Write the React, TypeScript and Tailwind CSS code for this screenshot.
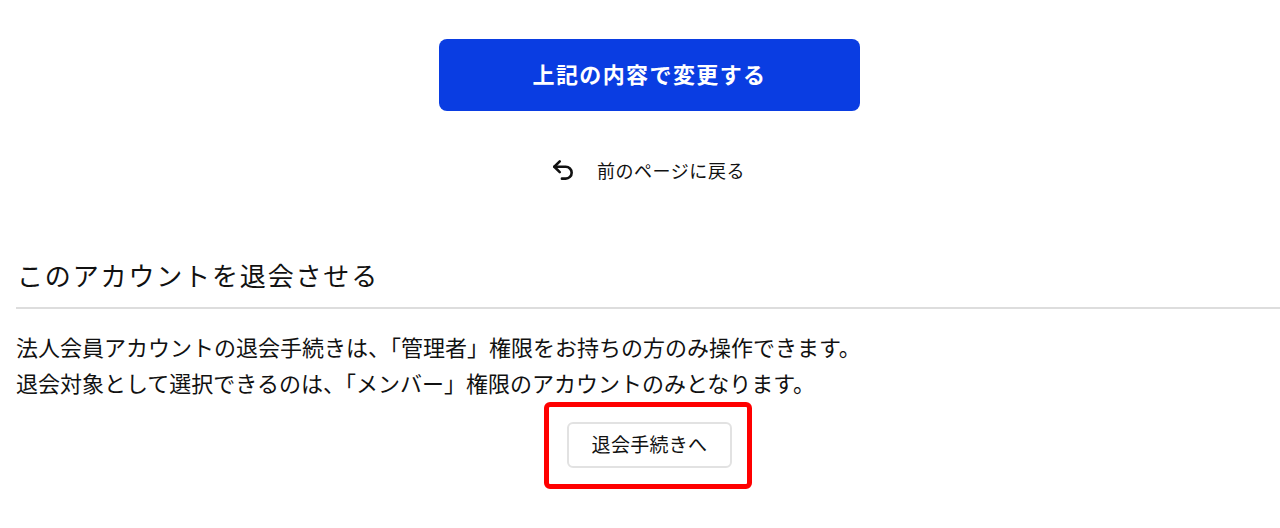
import { Undo2 } from "lucide-react";

const FONT = "font-['Noto_Sans_CJK_JP','Noto_Sans_CJK_SC',sans-serif]";

export default function App() {
    return (
        <div className={`${FONT} h-[528px] w-[1280px] overflow-hidden bg-white pt-[39px] text-[#111]`}>
            <div className="flex justify-center pl-[19px]">
                <button className="h-[72px] w-[421px] rounded-[8px] bg-[#0a3de2] pb-[4px] text-[22px] font-bold tracking-[1.4px] text-white">
                    上記の内容で変更する
                </button>
            </div>

            <div className="mt-[44px] flex items-center justify-center pl-[15px]">
                <Undo2 className="h-[26px] w-[26px]" strokeWidth={2.4} />
                <span className="ml-[21px] text-[18px] leading-[30px] tracking-[0.55px]">前のページに戻る</span>
            </div>

            <div className="mt-[70px] pl-[16px]">
                <h2 className="border-b-2 border-[#ddd] pb-[12px] pl-[1px] text-[26px] leading-[40px] tracking-[1.85px]">
                    このアカウントを退会させる
                </h2>
                <p className="mt-[19px] text-[22px] leading-[36px]">
                    法人会員アカウントの退会手続きは、「管理者」権限をお持ちの方のみ操作できます。
                    <br />
                    退会対象として選択できるのは、「メンバー」権限のアカウントのみとなります。
                </p>
            </div>

            <div className="mt-[2px] flex justify-center pl-[16px]">
                <div className="flex h-[87px] w-[208px] items-center justify-center rounded-[6px] border-[5px] border-[#ff0000] pb-[1px] pl-[3px]">
                    <button className="h-[46px] w-[165px] rounded-[6px] border-2 border-[#e2e2e2] bg-white pb-[2px] text-[19px] tracking-[0.3px]">
                        退会手続きへ
                    </button>
                </div>
            </div>
        </div>
    );
}
